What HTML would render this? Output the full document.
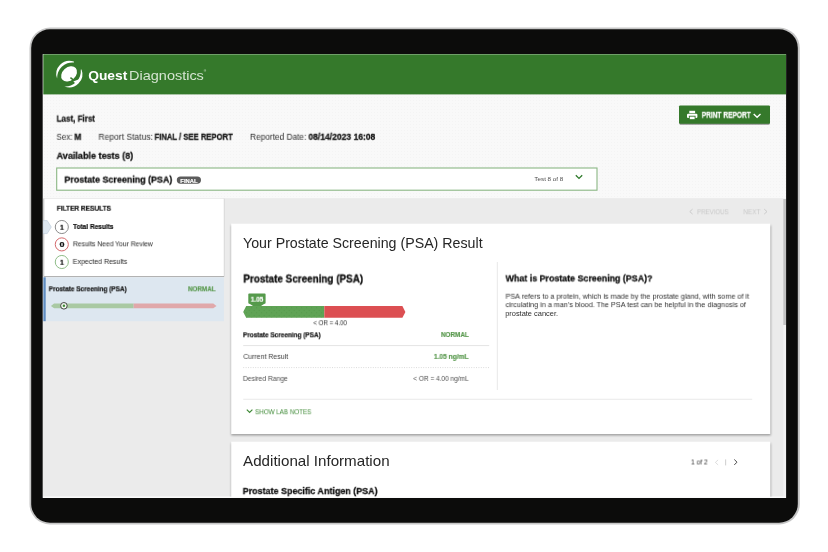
<!DOCTYPE html>
<html lang="en">
<head>
<meta charset="utf-8">
<title>Quest Diagnostics - Prostate Screening (PSA) Result</title>
<style>
*{box-sizing:border-box;margin:0;padding:0}
html,body{width:828px;height:552px;overflow:hidden;background:#fff}
body{font-family:"Liberation Sans",Arial,sans-serif;color:#1a1a1a;position:relative}
.t{position:absolute;white-space:nowrap;line-height:1;transform-origin:0 0;will-change:transform}
#device{position:absolute;left:0;top:0;width:828px;height:552px}
#screen{position:absolute;left:43px;top:54px;width:743px;height:444px;overflow:hidden;background:transparent}
#bg{position:absolute;left:0;top:0}
</style>
</head>
<body>
<svg id="device" viewBox="0 0 828 552" width="828" height="552">
  <rect x="29.5" y="27.6" width="770.3" height="496.8" rx="20.4" fill="#c6c6c6"/>
  <rect x="31.2" y="29.2" width="766.6" height="493.5" rx="18.8" fill="#0c0c0b"/>
  <rect x="42.7" y="54.1" width="743.4" height="443.8" fill="#fdfdfd"/>
</svg>
<div id="screen">
<svg id="bg" viewBox="0 0 743 444" width="743" height="444">
  <defs>
    <filter id="sh" x="-5%" y="-5%" width="110%" height="115%"><feGaussianBlur stdDeviation="1.1"/></filter>
    <filter id="sh2" x="-5%" y="-20%" width="110%" height="150%"><feGaussianBlur stdDeviation=".7"/></filter>
    <pattern id="dots" width="5" height="5" patternUnits="userSpaceOnUse"><circle cx="1.2" cy="1.2" r=".55" fill="#3f7f38" opacity=".4"/><circle cx="3.7" cy="3.7" r=".55" fill="#3f7f38" opacity=".4"/></pattern>
    <pattern id="grain" width="3" height="3" patternUnits="userSpaceOnUse"><rect x="1" y="1" width="1" height="1" fill="#000" opacity=".02"/></pattern>
  </defs>
  <!-- page areas -->
  <rect x="0" y="0" width="743" height="442.7" fill="#ebebeb"/>
  <rect x="0" y="0" width="743" height="144.1" fill="#f9f9f9"/>
  <rect x="0" y="40" width="743" height="104.1" fill="url(#grain)"/>
  <rect x="0.3" y="0.3" width="742.7" height="40.1" fill="#35792b"/>
  <rect x="740.3" y="144.1" width="2.7" height="298.6" fill="#f3f3f3"/>
  <rect x="740.3" y="145" width="2.7" height="126" fill="#c2c2c2"/>

  <!-- logo -->
  <g transform="translate(12 6)">
    <path d="M18.9 1.6A13.2 13.2 0 0 0 2.1 18.6A15.2 15.2 0 0 1 18.9 2.6Z" fill="#fff"/>
    <path d="M26.5 9.4A13.2 13.2 0 0 1 9.3 26.4A15.4 15.4 0 0 0 25.8 9.6Z" fill="#fff"/>
    <ellipse cx="14.1" cy="13.9" rx="8.9" ry="6.6" transform="rotate(-42 14.1 13.9)" fill="#fff"/>
    <path d="M15.4 17.6L20.6 21.6" stroke="#35792b" stroke-width="1.5" fill="none"/>
    <path d="M18.3 21.4L23.4 19.4 24.6 20.6 20.4 23.2Z" fill="#fff"/>
  </g>

  <!-- print button -->
  <rect x="636.4" y="53.4" width="90.4" height="17.4" rx="1.2" fill="#000" opacity=".42" filter="url(#sh2)"/>
  <rect x="636" y="51.4" width="91" height="18.4" rx="1.2" fill="#35792b"/>
  <g transform="translate(644 56.8)">
    <rect x="2.3" y="0" width="5.8" height="2.4" fill="#fff"/>
    <rect x="0" y="2.9" width="10.4" height="4.4" rx="1.1" fill="#fff"/>
    <rect x="2.3" y="5.4" width="5.8" height="3.5" fill="#fff" stroke="#35792b" stroke-width=".9"/>
  </g>
  <path d="M710.7 60.1L714.1 63.2 717.5 60.1" fill="none" stroke="#fff" stroke-width="1.4"/>

  <!-- select -->
  <rect x="13.7" y="114" width="540.3" height="22.2" fill="#fff" stroke="#8ab784" stroke-width="1.1"/>
  <rect x="133.8" y="122.4" width="24.2" height="7.4" rx="3.7" fill="#5c5c5c"/>
  <path d="M532.8 121.2L536 124.4 539.2 121.2" fill="none" stroke="#2f7a2b" stroke-width="1.3"/>

  <!-- prev / next chevrons -->
  <path d="M649.6 155.1L646.8 157.6 649.6 160.1" fill="none" stroke="#cbcbcb" stroke-width="1"/>
  <path d="M721.2 155.1L724 157.6 721.2 160.1" fill="none" stroke="#cbcbcb" stroke-width="1"/>

  <!-- sidebar -->
  <rect x="0.6" y="144.6" width="180.6" height="78.2" fill="#000" opacity=".3" filter="url(#sh2)"/>
  <rect x="1.2" y="144.4" width="179.7" height="77.6" fill="#fff"/>
  <path d="M0 166.6h4.2L8.3 173 4.2 179.6H0z" fill="#dde7f0" stroke="#b9c7d6" stroke-width=".6"/>
  <circle cx="18.8" cy="173" r="6.55" fill="#fff" stroke="#8c8c8c" stroke-width="1"/>
  <circle cx="18.8" cy="190.4" r="6.55" fill="#fff" stroke="#d4696c" stroke-width="1"/>
  <circle cx="18.8" cy="208" r="6.55" fill="#fff" stroke="#8fbd88" stroke-width="1"/>
  <rect x="0" y="223.3" width="180.9" height="43.9" fill="#dde7f0"/>
  <rect x="0.4" y="223.3" width="2.3" height="43.9" fill="#5f8cc0"/>
  <path d="M7.9 251.9l3.2-2.3h79.5v4.6H11.1z" fill="#a9c9a3"/>
  <path d="M90.6 249.6h79.7l3.2 2.3-3.2 2.3H90.6z" fill="#e0a8aa"/>
  <circle cx="20.9" cy="251.8" r="3.3" fill="#f1f6ef" stroke="#2a2a2a" stroke-width=".85"/>
  <circle cx="20.9" cy="251.8" r="1.2" fill="#3f8a36"/>

  <!-- card 1 -->
  <rect x="188.2" y="171.4" width="539.6" height="210" fill="#000" opacity=".34" filter="url(#sh)"/>
  <rect x="188.2" y="169.6" width="539.1" height="210.4" fill="#fff"/>
  <rect x="205.3" y="239.6" width="17.3" height="10" rx=".8" fill="#559a4b"/>
  <path d="M205.4 249h17.2l-5 3.2h-7.2z" fill="#559a4b"/>
  <path d="M200.2 257.9l3-5.9h78.1v11.8h-78.1z" fill="#5fa355"/>
  <path d="M200.2 257.9l3-5.9h78.1v11.8h-78.1z" fill="url(#dots)"/>
  <path d="M281.3 252h78.1l3 5.9-3 5.9h-78.1z" fill="#dc4f52"/>
  <rect x="200.2" y="291.1" width="246" height="1" fill="#e4e4e4"/>
  <path d="M200.2 313.6h246" stroke="#dadada" stroke-width="1" stroke-dasharray="1 1.4"/>
  <rect x="453.8" y="208" width="1" height="128" fill="#e8e8e8"/>
  <rect x="200.2" y="344.7" width="509" height="1.2" fill="#ededed"/>
  <path d="M203.8 355.6L206.6 358.4 209.4 355.6" fill="none" stroke="#3f8a36" stroke-width="1.2"/>

  <!-- card 2 -->
  <rect x="188.2" y="389.2" width="539.6" height="60" fill="#000" opacity=".3" filter="url(#sh)"/>
  <rect x="188.2" y="387.6" width="539.1" height="60" fill="#fff"/>
  <path d="M675.1 405.9L672.4 408.4 675.1 410.9" fill="none" stroke="#cfcfcf" stroke-width=".7"/>
  <rect x="682.4" y="405.4" width=".7" height="6" fill="#b8b8b8"/>
  <path d="M691.3 405.5L694 408.2 691.3 410.9" fill="none" stroke="#3a3a3a" stroke-width=".95"/>
  <rect x="0" y="442.7" width="743" height="1.3" fill="#fbfbfb"/>
</svg>
<div class="t" style="left:160px;top:16px;font-size:3.6px;color:#e8f0e6;transform:translate(.6px,.2px)">®</div>
<div class="t" style="left:45px;top:14px;font-size:13.4px;color:#fff;transform:translate(0.20px,0.80px) scaleX(1.0301);font-weight:700">Quest</div>
<div class="t" style="left:86px;top:14px;font-size:13.4px;color:#d6e5d2;transform:translate(0.12px,0.80px) scaleX(1.0796)">Diagnostics</div>
<div class="t" style="left:13px;top:60px;font-size:8.8px;color:#111;transform:translate(0.59px,0.60px) scaleX(0.9154);font-weight:700;-webkit-text-stroke:0.26px #111">Last, First</div>
<div class="t" style="left:13px;top:78px;font-size:8.6px;color:#2c2c2c;transform:translate(0.42px,0.80px) scaleX(0.9367)">Sex:</div>
<div class="t" style="left:31px;top:78px;font-size:8.6px;color:#111;transform:translate(0.28px,0.80px) scaleX(0.9933);font-weight:700;-webkit-text-stroke:0.26px #111">M</div>
<div class="t" style="left:55px;top:78px;font-size:8.6px;color:#2c2c2c;transform:translate(0.42px,0.80px) scaleX(0.9937)">Report Status:</div>
<div class="t" style="left:111px;top:78px;font-size:8.6px;color:#111;transform:translate(0.51px,0.80px) scaleX(0.8923);font-weight:700;-webkit-text-stroke:0.26px #111">FINAL / SEE REPORT</div>
<div class="t" style="left:207px;top:78px;font-size:8.6px;color:#2c2c2c;transform:translate(0.05px,0.80px) scaleX(0.9665)">Reported Date:</div>
<div class="t" style="left:265px;top:78px;font-size:8.6px;color:#111;transform:translate(0.39px,0.80px) scaleX(0.9937);font-weight:700;-webkit-text-stroke:0.26px #111">08/14/2023 16:08</div>
<div class="t" style="left:13px;top:96px;font-size:9.6px;color:#111;transform:translate(0.56px,0.80px) scaleX(0.9436);font-weight:700;-webkit-text-stroke:0.29px #111">Available tests (8)</div>
<div class="t" style="left:21px;top:120px;font-size:9.9px;color:#111;transform:translate(0.40px,0.60px) scaleX(0.9022);font-weight:700;-webkit-text-stroke:0.30px #111">Prostate Screening (PSA)</div>
<div class="t" style="left:491px;top:122px;font-size:6.2px;color:#4c4c4c;transform:translate(0.37px,0.00px) scaleX(1.0134)">Test 8 of 8</div>
<div class="t" style="left:658px;top:56px;font-size:8.3px;color:#fff;transform:translate(0.75px,0.70px) scaleX(0.7934);font-weight:700;-webkit-text-stroke:0.25px #fff">PRINT REPORT</div>
<div class="t" style="left:654px;top:154px;font-size:7.4px;color:#c9c9c9;transform:translate(0.08px,0.20px) scaleX(0.8230)">PREVIOUS</div>
<div class="t" style="left:700px;top:154px;font-size:7.4px;color:#c9c9c9;transform:translate(0.33px,0.20px) scaleX(0.8593)">NEXT</div>
<div class="t" style="left:13px;top:150px;font-size:7.8px;color:#111;transform:translate(0.74px,0.70px) scaleX(0.8386);font-weight:700;-webkit-text-stroke:0.23px #111">FILTER RESULTS</div>
<div class="t" style="left:29px;top:169px;font-size:7.0px;color:#111;transform:translate(0.98px,0.00px) scaleX(0.9328);font-weight:700;-webkit-text-stroke:0.21px #111">Total Results</div>
<div class="t" style="left:29px;top:186px;font-size:7.0px;color:#1e1e1e;transform:translate(0.95px,0.30px) scaleX(0.9638)">Results Need Your Review</div>
<div class="t" style="left:29px;top:203px;font-size:7.0px;color:#1e1e1e;transform:translate(0.72px,0.90px) scaleX(0.9998)">Expected Results</div>
<div class="t" style="left:5px;top:231px;font-size:7.0px;color:#111;transform:translate(0.68px,0.30px) scaleX(0.9200);font-weight:700;-webkit-text-stroke:0.21px #111">Prostate Screening (PSA)</div>
<div class="t" style="left:144px;top:231px;font-size:7.0px;color:#5b9a50;transform:translate(0.97px,0.30px) scaleX(0.8964);font-weight:700;-webkit-text-stroke:0.21px #5b9a50">NORMAL</div>
<div class="t" style="left:200px;top:182px;font-size:14.2px;color:#262626;transform:translate(0.01px,0.10px) scaleX(1.0015)">Your Prostate Screening (PSA) Result</div>
<div class="t" style="left:200px;top:219px;font-size:10.6px;color:#111;transform:translate(0.33px,0.50px) scaleX(0.9335);font-weight:700;-webkit-text-stroke:0.32px #111">Prostate Screening (PSA)</div>
<div class="t" style="left:207px;top:242px;font-size:6.8px;color:#fff;transform:translate(0.78px,0.70px) scaleX(0.9388);font-weight:700;-webkit-text-stroke:0.20px #fff">1.05</div>
<div class="t" style="left:270px;top:265px;font-size:7.0px;color:#2a2a2a;transform:translate(0.31px,0.20px) scaleX(0.8809)">&lt; OR = 4.00</div>
<div class="t" style="left:199px;top:277px;font-size:7.0px;color:#111;transform:translate(0.92px,0.30px) scaleX(0.9172);font-weight:700;-webkit-text-stroke:0.21px #111">Prostate Screening (PSA)</div>
<div class="t" style="left:397px;top:277px;font-size:7.0px;color:#5b9a50;transform:translate(0.93px,0.00px) scaleX(0.9049);font-weight:700;-webkit-text-stroke:0.21px #5b9a50">NORMAL</div>
<div class="t" style="left:200px;top:298px;font-size:7.0px;color:#3a3a3a;transform:translate(0.32px,0.90px) scaleX(0.9921)">Current Result</div>
<div class="t" style="left:390px;top:298px;font-size:7.0px;color:#5b9a50;transform:translate(0.89px,0.90px) scaleX(0.9484);font-weight:700;-webkit-text-stroke:0.21px #5b9a50">1.05 ng/mL</div>
<div class="t" style="left:199px;top:320px;font-size:7.0px;color:#4c4c4c;transform:translate(0.92px,0.90px) scaleX(0.9607)">Desired Range</div>
<div class="t" style="left:370px;top:320px;font-size:7.0px;color:#4c4c4c;transform:translate(0.23px,0.90px) scaleX(0.9308)">&lt; OR = 4.00 ng/mL</div>
<div class="t" style="left:462px;top:219px;font-size:9.8px;color:#111;transform:translate(0.55px,0.40px) scaleX(0.9057);font-weight:700;-webkit-text-stroke:0.29px #111">What is Prostate Screening (PSA)?</div>
<div class="t" style="left:462px;top:238px;font-size:7.4px;color:#2c2c2c;transform:translate(0.52px,0.70px) scaleX(0.9832)">PSA refers to a protein, which is made by the prostate gland, with some of it</div>
<div class="t" style="left:462px;top:247px;font-size:7.4px;color:#2c2c2c;transform:translate(0.59px,0.10px) scaleX(0.9775)">circulating in a man’s blood. The PSA test can be helpful in the diagnosis of</div>
<div class="t" style="left:462px;top:255px;font-size:7.4px;color:#2c2c2c;transform:translate(0.17px,0.50px) scaleX(1.0049)">prostate cancer.</div>
<div class="t" style="left:212px;top:354px;font-size:7.0px;color:#3f8a36;transform:translate(0.03px,0.20px) scaleX(0.8931)">SHOW LAB NOTES</div>
<div class="t" style="left:200px;top:400px;font-size:14.2px;color:#262626;transform:translate(0.10px,0.00px) scaleX(1.0673)">Additional Information</div>
<div class="t" style="left:647px;top:404px;font-size:7.0px;color:#333;transform:translate(0.93px,0.50px) scaleX(0.9627)">1 of 2</div>
<div class="t" style="left:199px;top:432px;font-size:9.8px;color:#111;transform:translate(0.71px,0.10px) scaleX(0.9134);font-weight:700;-webkit-text-stroke:0.29px #111">Prostate Specific Antigen (PSA)</div>
<div class="t" style="left:137px;top:124px;font-size:5.8px;color:#fff;transform:translate(0.36px,0.60px) scaleX(1.0016);font-weight:700;-webkit-text-stroke:0.17px #fff">FINAL</div>
<div class="t" style="left:16px;top:169px;font-size:8.0px;color:#111;transform:translate(0.96px,0.80px) scaleX(0.8730);font-weight:700;-webkit-text-stroke:0.24px #111">1</div>
<div class="t" style="left:16px;top:187px;font-size:8.0px;color:#111;transform:translate(0.47px,0.20px) scaleX(1.1213);font-weight:700;-webkit-text-stroke:0.24px #111">0</div>
<div class="t" style="left:16px;top:204px;font-size:8.0px;color:#111;transform:translate(0.96px,0.80px) scaleX(0.8730);font-weight:700;-webkit-text-stroke:0.24px #111">1</div>
</div>
</body>
</html>
